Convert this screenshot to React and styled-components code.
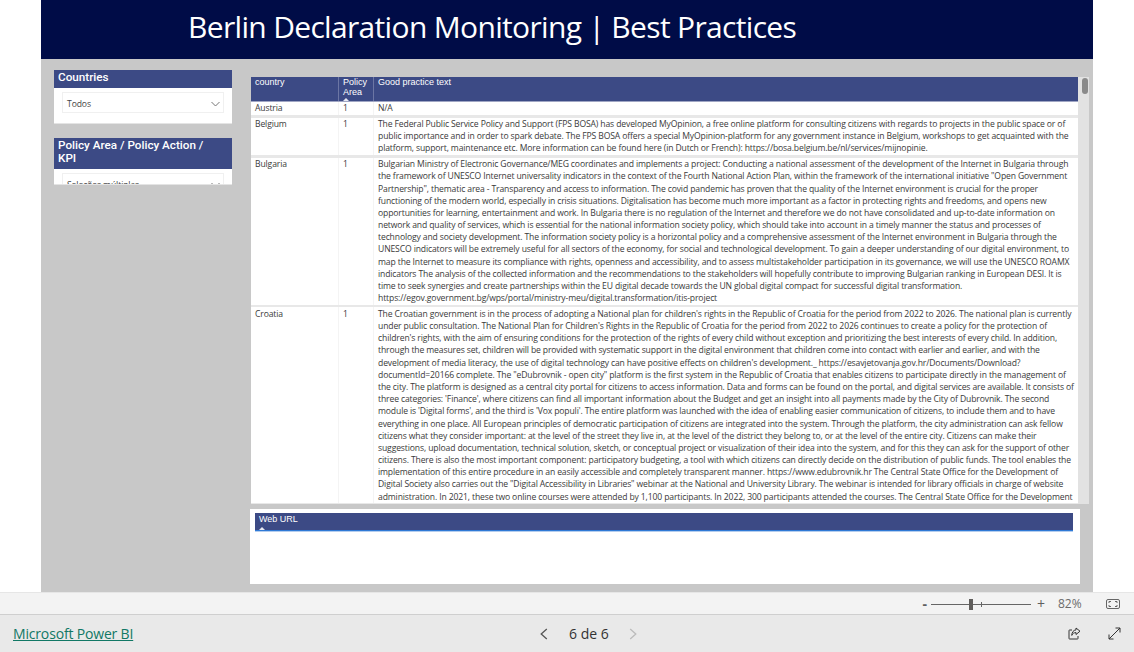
import React from 'react';
import styled, { createGlobalStyle } from 'styled-components';

const GlobalStyle = createGlobalStyle`
  html, body { margin: 0; padding: 0; background: #fff; }
  body { font-family: "Open Sans", "Liberation Sans", sans-serif; overflow: hidden; }
`;

const rows = [
  { country: 'Austria', area: '1', lines: ['N/A'] },
  {
    country: 'Belgium',
    area: '1',
    lines: [
      'The Federal Public Service Policy and Support (FPS BOSA) has developed MyOpinion, a free online platform for consulting citizens with regards to projects in the public space or of',
      'public importance and in order to spark debate. The FPS BOSA offers a special MyOpinion-platform for any government instance in Belgium, workshops to get acquainted with the',
      'platform, support, maintenance etc. More information can be found here (in Dutch or French): https://bosa.belgium.be/nl/services/mijnopinie.',
    ],
  },
  {
    country: 'Bulgaria',
    area: '1',
    lines: [
      'Bulgarian Ministry of Electronic Governance/MEG coordinates and implements a project: Conducting a national assessment of the development of the Internet in Bulgaria through',
      'the framework of UNESCO Internet universality indicators in the context of the Fourth National Action Plan, within the framework of the international initiative "Open Government',
      'Partnership", thematic area - Transparency and access to information. The covid pandemic has proven that the quality of the Internet environment is crucial for the proper',
      'functioning of the modern world, especially in crisis situations. Digitalisation has become much more important as a factor in protecting rights and freedoms, and opens new',
      'opportunities for learning, entertainment and work. In Bulgaria there is no regulation of the Internet and therefore we do not have consolidated and up-to-date information on',
      'network and quality of services, which is essential for the national information society policy, which should take into account in a timely manner the status and processes of',
      'technology and society development. The information society policy is a horizontal policy and a comprehensive assessment of the Internet environment in Bulgaria through the',
      'UNESCO indicators will be extremely useful for all sectors of the economy, for social and technological development. To gain a deeper understanding of our digital environment, to',
      'map the Internet to measure its compliance with rights, openness and accessibility, and to assess multistakeholder participation in its governance, we will use the UNESCO ROAMX',
      'indicators The analysis of the collected information and the recommendations to the stakeholders will hopefully contribute to improving Bulgarian ranking in European DESI. It is',
      'time to seek synergies and create partnerships within the EU digital decade towards the UN global digital compact for successful digital transformation.',
      'https://egov.government.bg/wps/portal/ministry-meu/digital.transformation/itis-project',
    ],
  },
  {
    country: 'Croatia',
    area: '1',
    lines: [
      "The Croatian government is in the process of adopting a National plan for children's rights in the Republic of Croatia for the period from 2022 to 2026. The national plan is currently",
      "under public consultation. The National Plan for Children's Rights in the Republic of Croatia for the period from 2022 to 2026 continues to create a policy for the protection of",
      "children's rights, with the aim of ensuring conditions for the protection of the rights of every child without exception and prioritizing the best interests of every child. In addition,",
      'through the measures set, children will be provided with systematic support in the digital environment that children come into contact with earlier and earlier, and with the',
      "development of media literacy, the use of digital technology can have positive effects on children's development._ https://esavjetovanja.gov.hr/Documents/Download?",
      'documentId=20166 complete. The "eDubrovnik - open city" platform is the first system in the Republic of Croatia that enables citizens to participate directly in the management of',
      'the city. The platform is designed as a central city portal for citizens to access information. Data and forms can be found on the portal, and digital services are available. It consists of',
      "three categories: 'Finance', where citizens can find all important information about the Budget and get an insight into all payments made by the City of Dubrovnik. The second",
      "module is 'Digital forms', and the third is 'Vox populi'. The entire platform was launched with the idea of enabling easier communication of citizens, to include them and to have",
      'everything in one place. All European principles of democratic participation of citizens are integrated into the system. Through the platform, the city administration can ask fellow',
      'citizens what they consider important: at the level of the street they live in, at the level of the district they belong to, or at the level of the entire city. Citizens can make their',
      'suggestions, upload documentation, technical solution, sketch, or conceptual project or visualization of their idea into the system, and for this they can ask for the support of other',
      'citizens. There is also the most important component: participatory budgeting, a tool with which citizens can directly decide on the distribution of public funds. The tool enables the',
      'implementation of this entire procedure in an easily accessible and completely transparent manner. https://www.edubrovnik.hr The Central State Office for the Development of',
      'Digital Society also carries out the "Digital Accessibility in Libraries" webinar at the National and University Library. The webinar is intended for library officials in charge of website',
      'administration. In 2021, these two online courses were attended by 1,100 participants. In 2022, 300 participants attended the courses. The Central State Office for the Development',
    ],
  },
];

const Page = styled.div`
  width: 1134px;
  height: 652px;
  display: flex;
  flex-direction: column;
  overflow: hidden;
`;

const Canvas = styled.div`
  width: 1052px;
  height: 592px;
  margin: 0 auto;
  background: #c8c8c8;
  display: flex;
  flex-direction: column;
`;

const Banner = styled.header`
  height: 59px;
  flex: none;
  background: #000c47;
  padding-left: 147px;
  display: flex;
  align-items: center;
`;

const Title = styled.h1`
  margin: 0 0 7px;
  font-family: "Open Sans", sans-serif;
  font-weight: 400;
  font-size: 30px;
  letter-spacing: -0.67px;
  color: #fff;
  white-space: nowrap;
`;

const Body = styled.main`
  flex: 1;
  display: flex;
  padding: 11px 0 0 13px;
  gap: 18px;
`;

const Sidebar = styled.aside`
  width: 178px;
  flex: none;
  display: flex;
  flex-direction: column;
  gap: 15px;
`;

const Slicer = styled.section`
  height: ${p => p.$height}px;
  background: #fff;
  overflow: hidden;
  box-shadow: 0 1px 0 #e4e4e4;
`;

const SlicerTitle = styled.div`
  background: #3c4a85;
  color: #fff;
  font-family: "Roboto", sans-serif;
  font-weight: 500;
  font-size: 11.7px;
  line-height: 13px;
  padding: 1px 20px 4px 4px;
`;

const Dropdown = styled.div`
  margin: 4px 8px 0;
  height: 21px;
  box-sizing: border-box;
  border: 1px solid #f0f0f0;
  padding: 2px 3px 0 4px;
  display: flex;
  align-items: center;
  justify-content: space-between;
  font-size: 8.6px;
  letter-spacing: -0.1px;
  color: #444;
`;

const Main = styled.div`
  width: 839px;
  flex: none;
  display: flex;
  flex-direction: column;
  padding-top: 7px;
  gap: 5px;
`;

const TableWrap = styled.div`
  height: 427px;
  margin-left: 1px;
  display: flex;
  overflow: hidden;
`;

const Table = styled.div`
  width: 827px;
  flex: none;
  overflow: hidden;
  background: #e8e8e8;
`;

const HeadRow = styled.div`
  display: grid;
  grid-template-columns: 87px 35px 1fr;
  height: 25px;
  box-sizing: border-box;
  background: #3c4a85;
  border-bottom: 1px solid #a0a6c4;
`;

const HeadCell = styled.div`
  position: relative;
  padding: 0 0 0 4px;
  font-family: "Liberation Sans", sans-serif;
  font-size: 9px;
  line-height: 10px;
  color: #fff;
  border-left: ${p => (p.$first ? 'none' : '1px solid #6c76a4')};
`;

const SortCaret = styled.span`
  position: absolute;
  left: ${p => p.$left}px;
  bottom: 0;
  width: 0;
  height: 0;
  border-left: 3px solid transparent;
  border-right: 3px solid transparent;
  border-bottom: 3px solid #e8eaf4;
`;

const Row = styled.div`
  display: grid;
  grid-template-columns: 87px 35px 1fr;
  background: #fff;
  margin-bottom: 2.5px;
`;

const Cell = styled.div`
  padding: 0.4px 0 0.6px 4px;
  font-size: 8.6px;
  letter-spacing: -0.13px;
  line-height: 12.2px;
  color: #3a3a3a;
  white-space: nowrap;
  overflow: hidden;
  border-left: ${p => (p.$first ? 'none' : '1px solid #f4f4f4')};
`;

const Line = styled.div`
  height: 12.2px;
`;

const Track = styled.div`
  width: 11px;
  background: #e2e2e2;
  position: relative;
`;

const Thumb = styled.div`
  position: absolute;
  top: 1px;
  left: 4px;
  width: 6px;
  height: 16px;
  border-radius: 3px;
  background: #8a8a8a;
`;

const UrlPanel = styled.section`
  width: 830px;
  height: 75px;
  box-sizing: border-box;
  background: #fff;
  padding: 4px 7px 0 5px;
`;

const UrlHead = styled.div`
  position: relative;
  height: 18px;
  box-sizing: border-box;
  background: #3c4a85;
  border-bottom: 1px solid #2f7ad6;
  box-shadow: 0 1px 0 #b4cdee;
  padding: 1px 4px;
  font-family: "Liberation Sans", sans-serif;
  font-size: 9px;
  line-height: 10px;
  color: #fff;
`;

const ZoomBar = styled.div`
  height: 23px;
  flex: none;
  box-sizing: border-box;
  background: #f3f3f3;
  border-top: 1px solid #e6e6e6;
  border-bottom: 1px solid #cfcfcf;
  display: flex;
  align-items: center;
  justify-content: flex-end;
  padding-right: 14px;
  color: #666;
`;

const ZoomSign = styled.span`
  font-size: 14px;
  line-height: 14px;
  font-weight: ${p => (p.$bold ? 700 : 400)};
  color: #5f5f5f;
  margin: ${p => p.$margin};
`;

const Slider = styled.div`
  position: relative;
  width: 100px;
  height: 1px;
  margin-top: 2px;
  background: #666;
`;

const SliderThumb = styled.span`
  position: absolute;
  left: 38px;
  top: -5px;
  width: 4px;
  height: 11px;
  background: #605e5c;
`;

const SliderTick = styled.span`
  position: absolute;
  left: 50px;
  top: -2px;
  width: 1px;
  height: 5px;
  background: #666;
`;

const ZoomValue = styled.span`
  width: 25px;
  font-size: 12px;
  margin: 0 23px 0 13px;
  color: #6b6b6b;
`;

const Footer = styled.footer`
  flex: 1;
  background: #e9e9e9;
  display: grid;
  grid-template-columns: 527px auto 1fr;
  align-items: center;
  padding: 0 13px;
`;

const ReportLink = styled.a`
  font-size: 14px;
  letter-spacing: -0.17px;
  color: #117865;
  text-decoration: underline;
  justify-self: start;
`;

const Pager = styled.div`
  display: flex;
  align-items: center;
  gap: 20px;
  font-size: 14px;
  font-weight: 500;
  color: #333;
`;

const PageLabel = styled.span`
  margin-left: 1px;
`;

const FooterActions = styled.div`
  justify-self: end;
  display: flex;
  align-items: center;
  gap: 27px;
`;

const Icon = styled.svg`
  display: block;
  fill: none;
  stroke: ${p => p.$color || '#333'};
  stroke-width: ${p => p.$weight || 1};
`;

const Chevron = ({ dir, color }) => (
  <Icon width="8" height="12" viewBox="0 0 8 12" $color={color} $weight={1.3}>
    <path d={dir === 'left' ? 'M6.8 1 1.2 6l5.6 5' : 'M1.2 1l5.6 5-5.6 5'} />
  </Icon>
);

const SlicerChevron = () => (
  <Icon width="9" height="6" viewBox="0 0 9 6" $color="#777">
    <path d="M.5 1l4 4 4-4" />
  </Icon>
);

const App = () => (
  <Page>
    <GlobalStyle />
    <Canvas>
      <Banner>
        <Title>Berlin Declaration Monitoring | Best Practices</Title>
      </Banner>
      <Body>
        <Sidebar>
          <Slicer $height={53}>
            <SlicerTitle>Countries</SlicerTitle>
            <Dropdown>
              Todos
              <SlicerChevron />
            </Dropdown>
          </Slicer>
          <Slicer $height={46}>
            <SlicerTitle>Policy Area / Policy Action / KPI</SlicerTitle>
            <Dropdown>
              Seleções múltiplas
              <SlicerChevron />
            </Dropdown>
          </Slicer>
        </Sidebar>
        <Main>
          <TableWrap>
            <Table>
              <HeadRow>
                <HeadCell $first>country</HeadCell>
                <HeadCell>
                  Policy Area
                  <SortCaret $left={4} />
                </HeadCell>
                <HeadCell>Good practice text</HeadCell>
              </HeadRow>
              {rows.map(row => (
                <Row key={row.country}>
                  <Cell $first>{row.country}</Cell>
                  <Cell>{row.area}</Cell>
                  <Cell>
                    {row.lines.map(line => (
                      <Line key={line}>{line}</Line>
                    ))}
                  </Cell>
                </Row>
              ))}
            </Table>
            <Track>
              <Thumb />
            </Track>
          </TableWrap>
          <UrlPanel>
            <UrlHead>
              Web URL
              <SortCaret $left={4} />
            </UrlHead>
          </UrlPanel>
        </Main>
      </Body>
    </Canvas>
    <ZoomBar>
      <ZoomSign $bold $margin="0 4px 0 0">-</ZoomSign>
      <Slider>
        <SliderThumb />
        <SliderTick />
      </Slider>
      <ZoomSign $margin="0 0 0 6px">+</ZoomSign>
      <ZoomValue>82%</ZoomValue>
      <Icon width="14" height="10" viewBox="0 0 14 10" $color="#666">
        <rect x=".5" y=".5" width="13" height="9" rx="1.5" />
        <path d="M3 4V2.5h2M9 2.5h2V4M11 6v1.5H9M5 7.5H3V6" />
      </Icon>
    </ZoomBar>
    <Footer>
      <ReportLink href="#">Microsoft Power BI</ReportLink>
      <Pager>
        <Chevron dir="left" color="#555" />
        <PageLabel>6 de 6</PageLabel>
        <Chevron dir="right" color="#bbb" />
      </Pager>
      <FooterActions>
        <Icon width="13" height="13" viewBox="0 0 13 13">
          <path d="M4 3H1.5A.5.5 0 0 0 1 3.5v8a.5.5 0 0 0 .5.5h8a.5.5 0 0 0 .5-.5V9" />
          <path d="M8 1l4 3.2L8 7.5V5.6C6 5.6 4.6 6.4 3.8 8.4 3.8 5.4 5.4 3 8 2.9z" />
        </Icon>
        <Icon width="13" height="13" viewBox="0 0 13 13">
          <path d="M1 12 12 1M7.5 1H12v4.5M1 7.5V12h4.5" />
        </Icon>
      </FooterActions>
    </Footer>
  </Page>
);

export default App;
